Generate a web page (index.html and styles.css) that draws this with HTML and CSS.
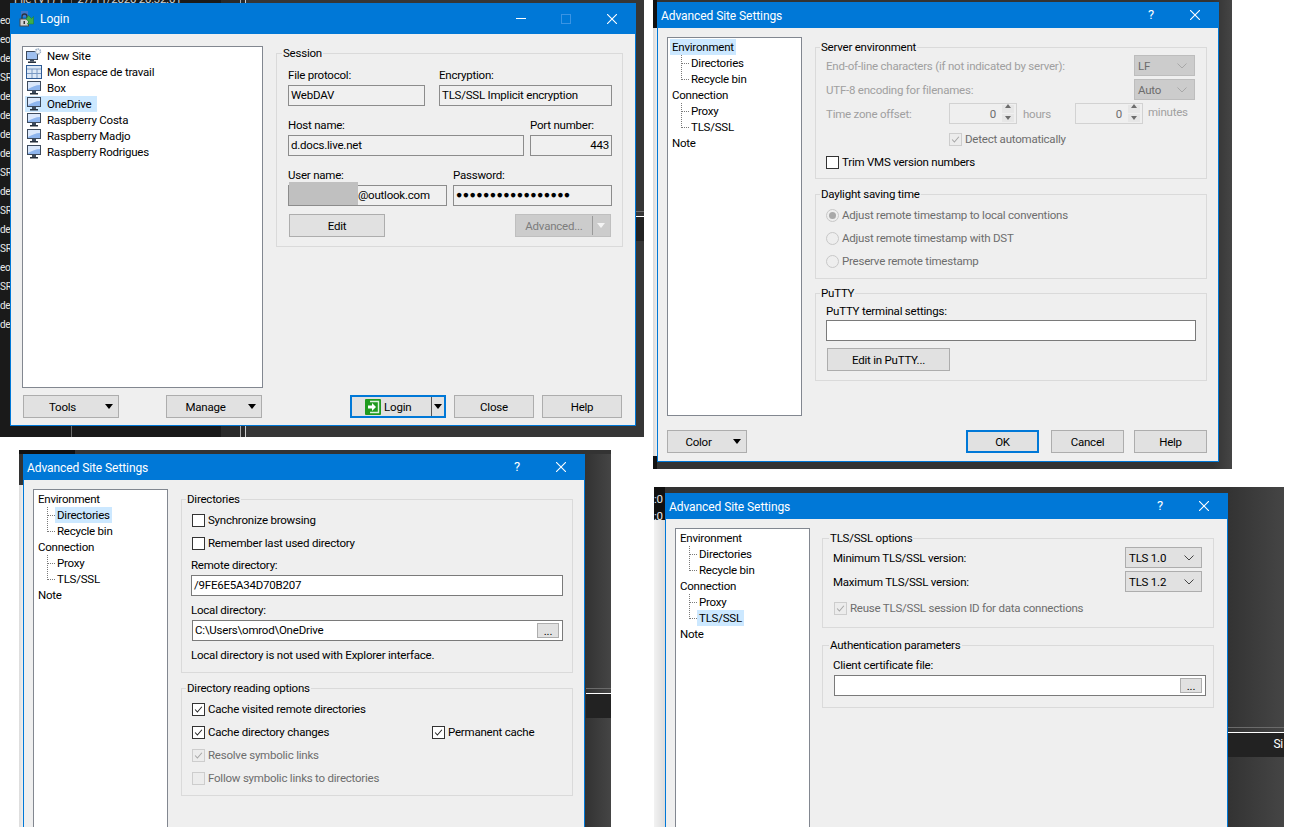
FILE: index.html
```html
<!DOCTYPE html>
<html lang="en">
<head>
<meta charset="utf-8">
<title>WinSCP dialogs</title>
<link rel="stylesheet" href="styles.css">
</head>
<body>
<svg class="defs" width="0" height="0" aria-hidden="true">
  <symbol id="monitor" viewBox="0 0 16 16">
    <rect x="1" y="1" width="14" height="10" fill="#3d4a5c"/>
    <rect x="2" y="2" width="12" height="8" fill="#8fb6ee"/>
    <path d="M2 2h12v3C10 5 6 7 2 9z" fill="#dbe8fb"/>
    <rect x="6" y="11" width="4" height="2" fill="#3d4a5c"/>
    <rect x="4" y="13" width="8" height="1.5" fill="#26303c"/>
  </symbol>
  <symbol id="check" viewBox="0 0 13 13">
    <path d="M2.5 6.5l2.7 3 5.3-6.2" fill="none" stroke="currentColor" stroke-width="1.2"/>
  </symbol>
  <symbol id="chev" viewBox="0 0 10 6">
    <path d="M.5 .5l4.5 4.5 4.500-4.500" fill="none" stroke="currentColor" stroke-width="1"/>
  </symbol>
  <symbol id="close" viewBox="0 0 10 10">
    <path d="M0 0l10 10M10 0L0 10" stroke="#fff" stroke-width="1.1" fill="none"/>
  </symbol>
</svg>

<div class="shot shot-login">
  <div class="bg-list">
    <span>eo</span><span>eo</span><span>de</span><span>SR</span><span>de</span><span>de</span><span>de</span><span>de</span><span>SR</span><span>de</span><span>SR</span><span>de</span><span>SR</span><span>eo</span><span>SR</span><span>de</span><span>de</span>
  </div>
  <div class="bg-top">File (VT) 1&nbsp;&nbsp;&nbsp;&nbsp;&nbsp;27/11/2020 20:32:01</div>
  <div class="win win-login">
    <header class="title title-login">
      <svg class="title-icon" viewBox="0 0 16 16" width="16" height="16">
        <rect x="2" y="0" width="7" height="6" fill="#3f78c9"/>
        <path d="M3 8V5.500a2.500 2.500 0 0 1 5 0V8" fill="none" stroke="#2b3440" stroke-width="1.300"/>
        <rect x="1" y="8" width="8.500" height="7" fill="#d4d4d4" stroke="#4a4a4a"/>
        <rect x="4.500" y="10" width="1.500" height="3" fill="#333"/>
        <path d="M9.500 4.500l3 3L14.500 5.500V13H8l2-2-3-3z" fill="#3fae49" stroke="#1f7f2a" stroke-width=".5"/>
      </svg>
      <span class="title-text">Login</span>
      <span class="cap cap-min"></span>
      <span class="cap cap-max"></span>
      <svg class="cap-x cap-x-login"><use href="#close"/></svg>
    </header>
    <div class="login-main">
      <ul class="tree site-tree">
        <li><svg class="ico" viewBox="0 0 16 16"><rect x="0" y="3" width="12" height="9" fill="#3d4a5c"/><rect x="1" y="4" width="10" height="7" fill="#9fc0f0"/><rect x="4" y="12" width="4" height="1.500" fill="#3d4a5c"/><rect x="2" y="13.500" width="8" height="1.500" fill="#26303c"/><circle cx="12" cy="3.500" r="2.500" fill="#eef2f7" stroke="#9aaec6" stroke-width="1.500" stroke-dasharray="1.500 .7"/></svg><span>New Site</span></li>
        <li><svg class="ico" viewBox="0 0 16 16"><rect x=".5" y="1.500" width="15" height="13" fill="#dce8f6" stroke="#2f5b95"/><path d="M1 5h14M6 5v9M11 5v9M1 9.500h14" stroke="#7a9ac4"/></svg><span>Mon espace de travail</span></li>
        <li><svg class="ico"><use href="#monitor"/></svg><span>Box</span></li>
        <li class="sel-row"><svg class="ico"><use href="#monitor"/></svg><span>OneDrive</span></li>
        <li><svg class="ico"><use href="#monitor"/></svg><span>Raspberry Costa</span></li>
        <li><svg class="ico"><use href="#monitor"/></svg><span>Raspberry Madjo</span></li>
        <li><svg class="ico"><use href="#monitor"/></svg><span>Raspberry Rodrigues</span></li>
      </ul>
      <fieldset class="group session">
        <legend>Session</legend>
        <div class="s-row">
          <div class="s-col w137"><label>File protocol:</label><div class="field">WebDAV</div></div>
          <div class="s-col w173"><label>Encryption:</label><div class="field">TLS/SSL Implicit encryption</div></div>
        </div>
        <div class="s-row">
          <div class="s-col w236"><label>Host name:</label><div class="field">d.docs.live.net</div></div>
          <div class="s-col w82"><label>Port number:</label><div class="field right">443</div></div>
        </div>
        <div class="s-row last">
          <div class="s-col w159 user"><label>User name:</label><div class="field right-user">@outlook.com</div><span class="mask"></span></div>
          <div class="s-col w159"><label>Password:</label><div class="field dots">●●●●●●●●●●●●●●●●●</div></div>
        </div>
        <div class="s-actions">
          <button class="btn w96">Edit</button>
          <button class="btn btn-off w96 split"><span class="lab">Advanced...</span><span class="sep"></span><span class="tri tri-off"></span></button>
        </div>
      </fieldset>
    </div>
    <footer class="login-foot">
      <button class="btn w96 drop"><span class="lab">Tools</span><span class="tri"></span></button>
      <button class="btn w96 drop"><span class="lab">Manage</span><span class="tri"></span></button>
      <button class="btn btn-def w96 drop login-btn">
        <span class="lab">
          <svg class="login-ico" viewBox="0 0 16 16" width="16" height="16"><rect width="16" height="16" rx="1" fill="#1f9a1f"/><path d="M5 2.500h8.500v11H5" fill="none" stroke="#dff3df" stroke-width="1.400"/><path d="M3 6.500h4V4l4 4-4 4V9.500H3z" fill="#fff"/></svg>Login</span>
        <span class="sep dark"></span><span class="tri"></span>
      </button>
      <button class="btn w80">Close</button>
      <button class="btn w80">Help</button>
    </footer>
  </div>
</div>

<div class="shot shot-env">
  <div class="win win-adv">
    <header class="title title-adv"><span class="title-text">Advanced Site Settings</span><span class="help">?</span><svg class="cap-x"><use href="#close"/></svg></header>
    <div class="adv-main">
      <ul class="tree nav tall-env">
        <li><span class="sel">Environment</span></li>
        <li class="sub first"><span>Directories</span></li>
        <li class="sub"><span>Recycle bin</span></li>
        <li><span>Connection</span></li>
        <li class="sub first"><span>Proxy</span></li>
        <li class="sub"><span>TLS/SSL</span></li>
        <li><span>Note</span></li>
      </ul>
      <div class="pane">
        <fieldset class="group">
          <legend>Server environment</legend>
          <div class="line h21"><span class="off grow">End-of-line characters (if not indicated by server):</span><span class="select select-off w61">LF<svg class="chev"><use href="#chev"/></svg></span></div>
          <div class="line h21 mt3"><span class="off grow">UTF-8 encoding for filenames:</span><span class="select select-off w61">Auto<svg class="chev"><use href="#chev"/></svg></span></div>
          <div class="line h21 mt3">
            <span class="off tz">Time zone offset:</span>
            <span class="spin">0<span class="arrows"><i class="up"></i><i class="down"></i></span></span>
            <span class="off unit-h">hours</span>
            <span class="spin">0<span class="arrows"><i class="up"></i><i class="down"></i></span></span>
            <span class="off unit-m">minutes</span>
          </div>
          <div class="line h16 mt7 indent-tz"><span class="cb cb-off"><svg><use href="#check"/></svg></span><span class="dim">Detect automatically</span></div>
          <div class="line h16 mt7 pb8"><span class="cb"></span><span>Trim VMS version numbers</span></div>
        </fieldset>
        <fieldset class="group mt7">
          <legend>Daylight saving time</legend>
          <div class="line h16 mt5"><span class="radio on"></span><span class="dim">Adjust remote timestamp to local conventions</span></div>
          <div class="line h16 mt7"><span class="radio"></span><span class="dim">Adjust remote timestamp with DST</span></div>
          <div class="line h16 mt7 pb9"><span class="radio"></span><span class="dim">Preserve remote timestamp</span></div>
        </fieldset>
        <fieldset class="group mt6">
          <legend>PuTTY</legend>
          <div class="line h16 mt2">PuTTY terminal settings:</div>
          <div class="input mt1 putty-input"></div>
          <button class="btn putty">Edit in PuTTY...</button>
        </fieldset>
      </div>
    </div>
    <footer class="adv-foot">
      <button class="btn w80 drop"><span class="lab">Color</span><span class="tri"></span></button>
      <button class="btn btn-def w73 push">OK</button>
      <button class="btn w73 g12">Cancel</button>
      <button class="btn w73 g10">Help</button>
    </footer>
  </div>
</div>

<div class="shot shot-dir">
  <div class="win win-adv">
    <header class="title title-adv"><span class="title-text">Advanced Site Settings</span><span class="help">?</span><svg class="cap-x"><use href="#close"/></svg></header>
    <div class="adv-main">
      <ul class="tree nav tall">
        <li><span>Environment</span></li>
        <li class="sub first"><span class="sel">Directories</span></li>
        <li class="sub"><span>Recycle bin</span></li>
        <li><span>Connection</span></li>
        <li class="sub first"><span>Proxy</span></li>
        <li class="sub"><span>TLS/SSL</span></li>
        <li><span>Note</span></li>
      </ul>
      <div class="pane">
        <fieldset class="group">
          <legend>Directories</legend>
          <div class="line h16 mt5"><span class="cb"></span><span>Synchronize browsing</span></div>
          <div class="line h16 mt7"><span class="cb"></span><span>Remember last used directory</span></div>
          <div class="line h16 mt6 pull">Remote directory:</div>
          <div class="input mt2 text pull">/9FE6E5A34D70B207</div>
          <div class="line h16 mt6 pull">Local directory:</div>
          <div class="input mt2 text with-btn">C:\Users\omrod\OneDrive<button class="mini">...</button></div>
          <div class="line h16 mt6 pb9 pull">Local directory is not used with Explorer interface.</div>
        </fieldset>
        <fieldset class="group mt7">
          <legend>Directory reading options</legend>
          <div class="line h16 mt5"><span class="cb"><svg><use href="#check"/></svg></span><span>Cache visited remote directories</span></div>
          <div class="line h16 mt7"><span class="cb"><svg><use href="#check"/></svg></span><span class="col-a">Cache directory changes</span><span class="cb"><svg><use href="#check"/></svg></span><span>Permanent cache</span></div>
          <div class="line h16 mt7"><span class="cb cb-off"><svg><use href="#check"/></svg></span><span class="dim">Resolve symbolic links</span></div>
          <div class="line h16 mt7 pb9"><span class="cb cb-off"></span><span class="dim">Follow symbolic links to directories</span></div>
        </fieldset>
      </div>
    </div>
  </div>
</div>

<div class="shot shot-tls">
  <div class="bg-tls"><span>:0</span><span>:0</span></div>
  <div class="bg-si">Si</div>
  <div class="win win-adv">
    <header class="title title-adv"><span class="title-text">Advanced Site Settings</span><span class="help">?</span><svg class="cap-x"><use href="#close"/></svg></header>
    <div class="adv-main">
      <ul class="tree nav tall">
        <li><span>Environment</span></li>
        <li class="sub first"><span>Directories</span></li>
        <li class="sub"><span>Recycle bin</span></li>
        <li><span>Connection</span></li>
        <li class="sub first"><span>Proxy</span></li>
        <li class="sub"><span class="sel">TLS/SSL</span></li>
        <li><span>Note</span></li>
      </ul>
      <div class="pane">
        <fieldset class="group">
          <legend>TLS/SSL options</legend>
          <div class="line h21 mt1"><span class="grow">Minimum TLS/SSL version:</span><span class="select w77">TLS 1.0<svg class="chev"><use href="#chev"/></svg></span></div>
          <div class="line h21 mt3"><span class="grow">Maximum TLS/SSL version:</span><span class="select w77">TLS 1.2<svg class="chev"><use href="#chev"/></svg></span></div>
          <div class="line h16 mt8 pb11 nudge"><span class="cb cb-off"><svg><use href="#check"/></svg></span><span class="dim">Reuse TLS/SSL session ID for data connections</span></div>
        </fieldset>
        <fieldset class="group mt9">
          <legend>Authentication parameters</legend>
          <div class="line h16 mt4">Client certificate file:</div>
          <div class="input mt2 with-btn cert"><button class="mini">...</button></div>
        </fieldset>
      </div>
    </div>
  </div>
</div>
</body>
</html>
```
FILE: styles.css
```css
* { box-sizing: border-box; }
html, body { margin: 0; height: 100%; overflow: hidden; background: #fff; }
body { font: 11.5px/16px Roboto, "Liberation Sans", sans-serif; letter-spacing: -0.22px; color: #000; position: relative; }
.defs { position: absolute; }
button { font: inherit; letter-spacing: inherit; color: inherit; padding: 0; }
ul { list-style: none; margin: 0; padding: 0; }

.shot { position: absolute; overflow: hidden; background-repeat: no-repeat; }
.shot-login {
  left: 0; top: 0; width: 644px; height: 437px;
  background-image:
    linear-gradient(#6b6b6b 0 1px, transparent 1px 5px, #fff 5px 6px, #222 6px 30px),
    linear-gradient(90deg, #1a1a1a 0 71px, #6a6a6a 71px 72px, #1a1a1a 72px 221px, #2a2a2a 221px 240px, #aaa 240px 241px, #2a2a2a 241px 245px, #ccc 245px 246px, #363636 246px);
  background-size: 9px 30px, 100% 100%;
  background-position: right 0 top 211px, 0 0;
}
.shot-env {
  left: 653px; top: 0; width: 579px; height: 469px;
  background-image:
    linear-gradient(#111, #111),
    linear-gradient(#111, #111),
    linear-gradient(90deg, #d8d8d8, #efefef),
    linear-gradient(90deg, #333 560px, #454545);
  background-size: 4px 28px, 4px 13px, 4px 100%, 100% 100%;
  background-position: 0 0, 0 456px, 0 0, 0 0;
}
.shot-dir {
  left: 19px; top: 450px; width: 592px; height: 377px;
  background-image:
    linear-gradient(#6b6b6b 0 1px, transparent 1px 5px, #fff 5px 6px, #222 6px 30px),
    linear-gradient(90deg, #111 0 56px, #333 56px),
    linear-gradient(90deg, #dcdcdc, #efefef),
    linear-gradient(90deg, #333 567px, #454545);
  background-size: 25px 30px, 100% 4px, 4px 100%, 100% 100%;
  background-position: right 0 top 238px, 0 0, 0 35px, 0 0;
  background-color: #111;
}
.shot-tls {
  left: 654px; top: 487px; width: 630px; height: 340px;
  background-image:
    linear-gradient(#6b6b6b 0 1px, transparent 1px 5px, #fff 5px 6px, #222 6px 30px),
    linear-gradient(#111, #111),
    linear-gradient(90deg, #f2f2f2, #dcdcdc),
    linear-gradient(90deg, #333 574px, #454545);
  background-size: 56px 30px, 11px 33px, 11px 100%, 100% 100%;
  background-position: right 0 top 240px, 0 0, 0 0, 0 0;
}
.bg-list { position: absolute; left: 0; top: 11px; width: 10px; display: flex; flex-direction: column; color: #e8e8e8; font-size: 10px; letter-spacing: -0.3px; line-height: 19px; }
.bg-top { position: absolute; left: 14px; top: -9px; color: #d0d0d0; white-space: pre; }
.bg-tls { position: absolute; left: 0; top: 4px; width: 11px; display: flex; flex-direction: column; color: #e8e8e8; line-height: 17px; }
.bg-si { position: absolute; right: 1px; top: 249px; color: #fff; font-size: 12px; }

.win { position: absolute; background: #efefef; border: 1px solid #0078d7; }
.win-login { left: 10px; top: 3px; width: 626px; height: 423px; }
.win-adv { width: 562px; }
.shot-env .win-adv { left: 4px; top: 2px; height: 460px; }
.shot-dir .win-adv { left: 4px; top: 4px; height: 400px; }
.shot-tls .win-adv { left: 11px; top: 6px; height: 360px; width: 563px; }

.title { background: #0078d7; color: #fff; display: flex; align-items: center; position: relative; }
.title-login { height: 30px; padding-left: 8px; }
.title-adv { height: 25px; padding-left: 3px; }
.title-icon { margin-right: 5px; }
.title-text { font-size: 12px; letter-spacing: -0.08px; }
.cap { position: absolute; }
.cap-min { left: 505px; top: 14px; width: 10px; height: 1px; background: #fff; }
.cap-max { left: 550px; top: 10px; width: 10px; height: 10px; border: 1px solid #3a94e4; }
.cap-x { position: absolute; right: 18px; top: 7px; width: 10px; height: 10px; }
.cap-x-login { right: 18px; top: 10px; }
.help { position: absolute; right: 64px; top: 4px; font-size: 13px; }

.tree { background: #fff; border: 1px solid #828790; flex: none; }
.login-main { display: flex; gap: 13px; padding: 11px 13px 0 11px; height: 354px; align-items: flex-start; }
.site-tree { width: 241px; height: 342px; margin-top: 1px; padding: 1px 2px; }
.site-tree li { display: flex; align-items: center; height: 16px; }
.site-tree .ico { width: 16px; height: 16px; flex: none; margin-left: 1px; }
.site-tree li span { padding-left: 5px; }
.sel-row { background: #cce8ff; width: 72px; }

.group { border: 1px solid #dadada; margin: 0; padding: 0 11px 0 10px; min-width: 0; }
.group legend { padding: 0 1px; margin-left: -6px; height: 16px; line-height: 16px; }
.shot-tls .group legend { margin-left: -4px; }
.session { width: 347px; flex: none; padding: 6px 10px 9px 11px; }
.s-row { display: flex; justify-content: space-between; margin-bottom: 11px; }
.s-row.last { margin-bottom: 8px; }
.s-col { display: flex; flex-direction: column; position: relative; }
.s-col label { height: 16px; margin-bottom: 2px; }
.w137 { width: 137px; } .w173 { width: 173px; } .w236 { width: 236px; } .w82 { width: 82px; }
.w159 { width: 159px; }
.field { height: 21px; border: 1.5px solid #8c8c8c; background: #f0f0f0; line-height: 18px; padding: 0 2px; white-space: nowrap; overflow: hidden; }
.right { text-align: right; }
.right-user { padding-left: 69px; }
.dots { font-size: 10.5px; letter-spacing: 0.4px; }
.mask { position: absolute; left: 1px; top: 15px; width: 69px; height: 23px; background: #c0c0c0; }
.s-actions { display: flex; justify-content: space-between; margin: 0 1px; }

.btn { height: 23px; border: 1px solid #adadad; background: #e1e1e1; text-align: center; flex: none; display: inline-flex; align-items: center; justify-content: center; }
.btn-off { background: #ccc; color: #7c7c7c; border-color: #bfbfbf; }
.btn-def { border: 2px solid #0078d7; }
.w96 { width: 96px; } .w80 { width: 80px; } .w73 { width: 73px; }
.drop .lab, .split .lab { flex: 1; }
.tri { width: 0; height: 0; border: 4.5px solid transparent; border-top: 5px solid #000; border-bottom: 0; margin: 0 5px 0 4px; }
.tri-off { border-top-color: #f4f4f4; }
.sep { width: 1px; height: 19px; background: #9a9a9a; }
.sep.dark { background: #555; width: 1.5px; }
.login-foot { display: flex; padding: 7px 13px 0 12px; gap: 8px; }
.login-foot .btn:nth-child(2) { margin-left: 39px; }
.login-foot .login-btn { margin-left: auto; }
.login-btn .lab { display: flex; align-items: center; justify-content: center; gap: 3px; padding-right: 6px; }
.login-btn .tri { margin: 0 2px; }
.login-ico { flex: none; }

.adv-main { display: flex; gap: 13px; padding: 9px 0 0 9px; align-items: flex-start; }
.shot-tls .adv-main { gap: 12px; }
.nav { width: 135px; padding: 1px 2px; }
.tall-env { height: 379px; }
.tall { height: 500px; }
.nav li { height: 16px; line-height: 16px; position: relative; }
.nav li span { display: inline-block; padding: 0 2px; }
.nav .sub { margin-left: 19px; }
.nav .sub::before { content: ""; position: absolute; left: -8px; top: -8px; width: 7px; height: 16px; border-left: 1px dotted #7a7a7a; border-bottom: 1px dotted #7a7a7a; }
.nav .sub.first::before { top: 0; height: 8px; }
.sel { background: #cce8ff; }
.pane { width: 392px; flex: none; margin-top: 2px; }

.line { display: flex; align-items: center; white-space: nowrap; }
.h16 { height: 16px; box-sizing: content-box; }
.h21 { height: 21px; }
.mt1 { margin-top: 1px; } .mt2 { margin-top: 2px; } .mt3 { margin-top: 3px; } .mt4 { margin-top: 4px; } .mt5 { margin-top: 5px; } .mt6 { margin-top: 6px; } .mt7 { margin-top: 7px; } .mt8 { margin-top: 8px; } .mt9 { margin-top: 9px; }
.pb8 { padding-bottom: 8px; } .pb9 { padding-bottom: 9px; } .pb11 { padding-bottom: 11px; }
.grow { flex: 1; }
.off { color: #a0a0a0; }
.dim { color: #6d6d6d; }
.nudge { margin-left: 1px; }
.pull { margin-left: -1px; }
.indent-tz { margin-left: 123px; }
.tz { width: 123px; }

.select { height: 21px; border: 1px solid #adadad; background: #e1e1e1; display: flex; align-items: center; justify-content: space-between; padding: 0 7px 0 3px; }
.select-off { background: #ccc; color: #6d6d6d; border-color: #bdbdbd; }
.select-off .chev { color: #a8a8a8; }
.chev { width: 10px; height: 6px; color: #444; }
.w61 { width: 61px; } .w77 { width: 77px; }

.spin { width: 68px; height: 21px; border: 1px solid #d2d2d2; color: #6d6d6d; display: flex; align-items: center; justify-content: flex-end; padding-right: 2px; }
.arrows { display: flex; flex-direction: column; margin-left: 6px; gap: 1px; }
.arrows i { width: 12px; height: 8px; background: #e6e6e6; position: relative; display: block; }
.arrows i::after { content: ""; position: absolute; left: 3px; border: 3px solid transparent; }
.arrows .up::after { top: -1px; border-bottom: 4px solid #6d6d6d; border-top: 0; }
.arrows .down::after { top: 2px; border-top: 4px solid #6d6d6d; border-bottom: 0; }
.unit-h { width: 58px; padding-left: 6px; }
.unit-m { padding-left: 5px; margin-top: -4px; }

.cb { width: 13px; height: 13px; border: 1px solid #333; background: #fff; margin-right: 3px; flex: none; display: inline-block; color: #222; }
.cb svg { display: block; width: 11px; height: 11px; }
.cb-off { border-color: #cdcdcd; background: #ececec; color: #a5a5a5; }
.radio { width: 13px; height: 13px; border: 1px solid #c8c8c8; border-radius: 50%; margin-right: 3px; flex: none; position: relative; background: #eee; }
.radio.on::after { content: ""; position: absolute; left: 2px; top: 2px; width: 7px; height: 7px; border-radius: 50%; background: #a8a8a8; }
.col-a { width: 224px; flex: none; }

.input { height: 21px; border: 1px solid #7a7a7a; background: #fff; line-height: 19px; padding: 0 2px; }
.putty-input { width: 370px; }
.text { white-space: nowrap; width: 372px; }
.with-btn { display: flex; align-items: center; justify-content: space-between; padding-right: 3px; width: 371px; }
.cert { margin-left: 1px; width: 372px; justify-content: flex-end; margin-bottom: 11px; }
.mini { width: 22px; height: 15px; background: #e1e1e1; border: 1px solid #adadad; line-height: 12px; }
.putty { width: 123px; margin: 7px 0 9px 1px; display: flex; }

.push { margin-left: auto; }
.g12 { margin-left: 12px; } .g10 { margin-left: 10px; }
.adv-foot { display: flex; padding: 14px 11px 0 9px; }
```
